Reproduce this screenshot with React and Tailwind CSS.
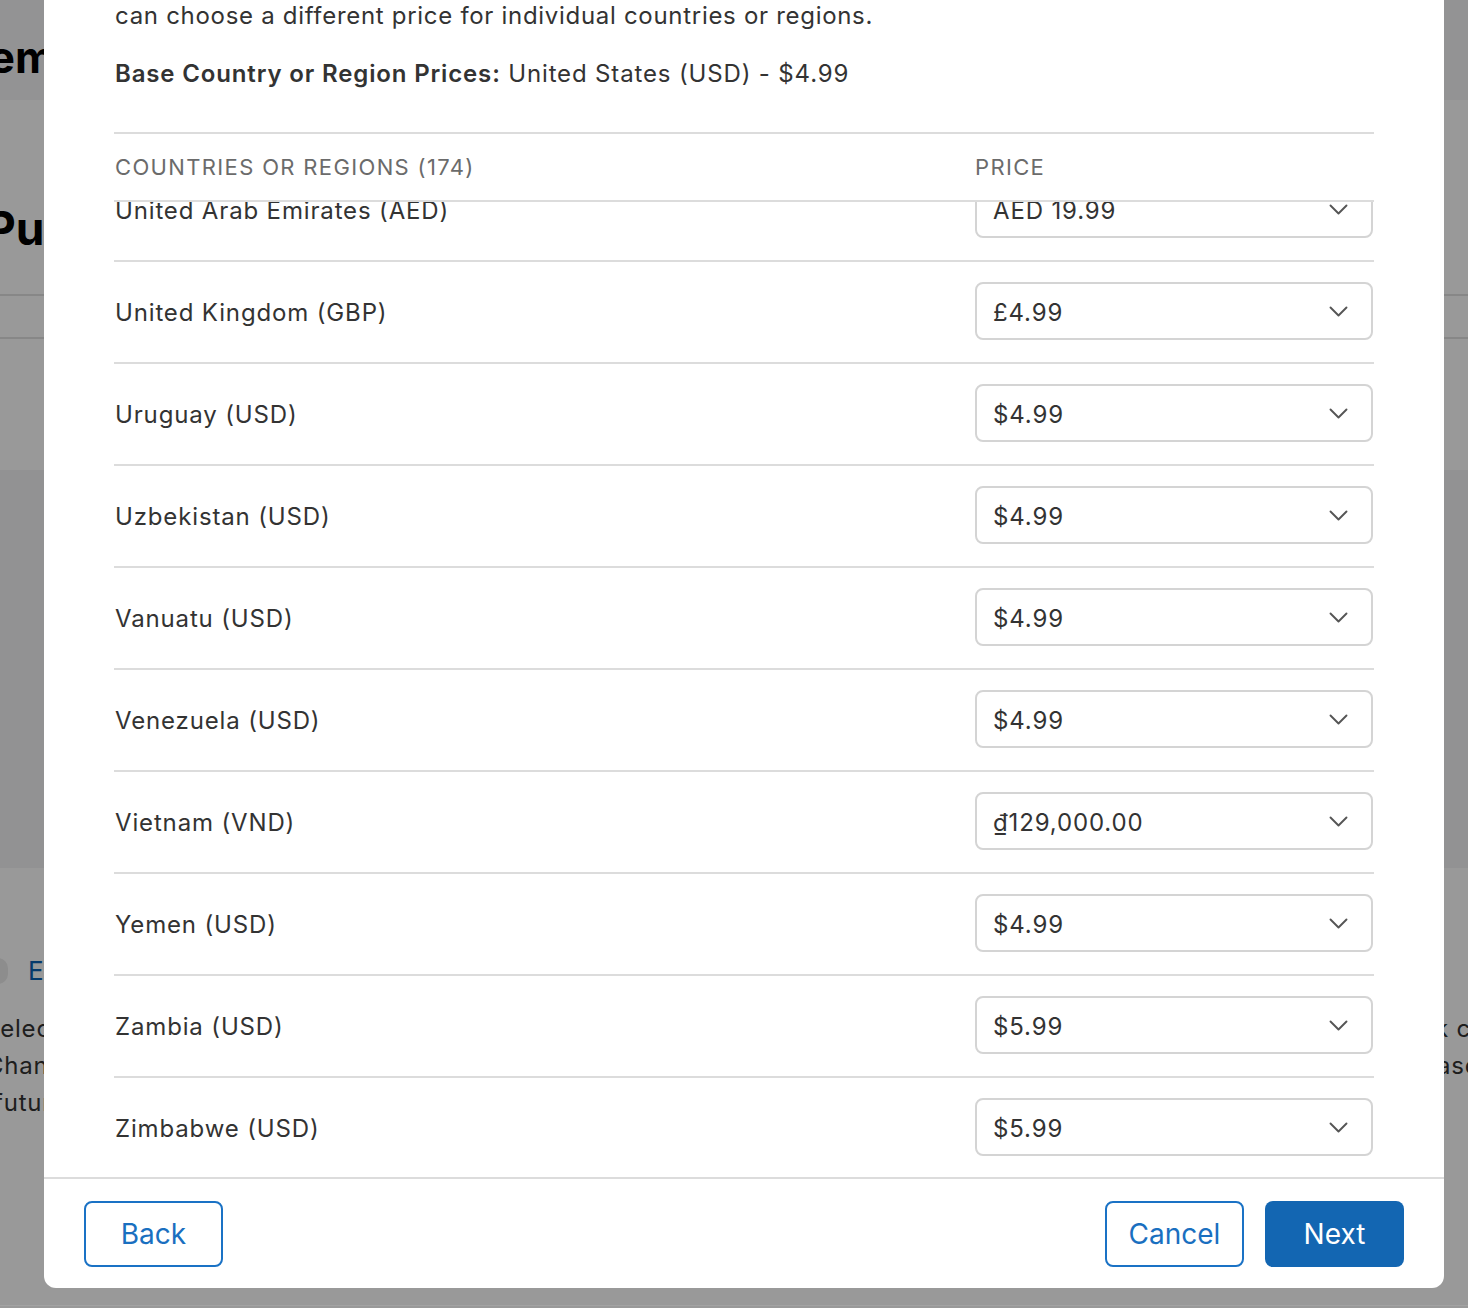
import React from 'react';

const rows = [
    { name: 'United Arab Emirates (AED)', price: 'AED 19.99' },
    { name: 'United Kingdom (GBP)', price: '£4.99' },
    { name: 'Uruguay (USD)', price: '$4.99' },
    { name: 'Uzbekistan (USD)', price: '$4.99' },
    { name: 'Vanuatu (USD)', price: '$4.99' },
    { name: 'Venezuela (USD)', price: '$4.99' },
    { name: 'Vietnam (VND)', price: '₫129,000.00' },
    { name: 'Yemen (USD)', price: '$4.99' },
    { name: 'Zambia (USD)', price: '$5.99' },
    { name: 'Zimbabwe (USD)', price: '$5.99' }
];

function Chevron() {
    return (
        <svg width="19" height="11" viewBox="0 0 19 11" fill="none" className="shrink-0">
            <path d="M1.5 1.5 L9.5 9.5 L17.5 1.5" stroke="#555" strokeWidth="1.9" strokeLinecap="round" strokeLinejoin="round" />
        </svg>
    );
}

function PriceSelect({ value }) {
    return (
        <div className="w-[398px] h-[58px] border-2 border-[#d4d4d4] rounded-[8px] bg-white flex items-center justify-between pl-[16px] pr-[23px]">
            <span className="pt-[3px] text-[24px] tracking-[0.85px] text-[#333]">{value}</span>
            <Chevron />
        </div>
    );
}

// page behind the dimmed overlay, only its edges show
function BackgroundPage() {
    return (
        <div className="w-full h-full flex flex-col bg-white text-[#333]">
            <div className="h-[100px] bg-[#f5f5f7] flex items-center pt-[14px]">
                <span className="-ml-[40px] text-[44px] font-bold text-black whitespace-nowrap">Item</span>
            </div>
            <div className="h-[370px] flex flex-col">
                <div className="mt-[100px] h-[56px] flex items-center">
                    <span className="-ml-[14px] text-[46px] font-bold text-black whitespace-nowrap">Purchase</span>
                </div>
                <div className="mt-[38px] h-[2px] bg-[#e2e2e2]" />
                <div className="mt-[41px] h-[2px] bg-[#e2e2e2]" />
            </div>
            <div className="h-[398px] bg-[#f4f4f6]" />
            <div className="flex-1 flex flex-col pt-[83px]">
                <div className="flex items-center gap-[20px] -ml-[12px]">
                    <div className="w-[20px] h-[26px] rounded-full bg-[#ececec]" />
                    <span className="text-[26px] text-[#0b62b3]">Edit</span>
                </div>
                <div className="mt-[20px] flex justify-between text-[24px] tracking-[0.8px] leading-[37px] whitespace-nowrap">
                    <div className="flex flex-col">
                        <span className="-ml-[16px]">Select</span>
                        <span className="-ml-[14px]">Change</span>
                        <span className="-ml-[6px]">future</span>
                    </div>
                    <div className="flex flex-col w-[30px] overflow-hidden">
                        <span className="-ml-[3px]">k c</span>
                        <span className="-ml-[1px]">ase</span>
                    </div>
                </div>
            </div>
        </div>
    );
}

export default function App() {
    return (
        <div className="relative w-[1468px] h-[1308px] overflow-hidden font-['Inter',sans-serif]">
            <BackgroundPage />
            <div className="absolute inset-0 bg-black/40" />
            <div className="absolute bottom-[2px] left-0 right-0 h-[1px] bg-white/10" />

            {/* modal */}
            <div className="absolute left-[44px] top-0 w-[1400px] bg-white rounded-b-[12px] flex flex-col text-[#333]">
                <div className="px-[70px]">
                    <p className="text-[24px] leading-[32px] tracking-[0.7px] pl-[1px]">can choose a different price for individual countries or regions.</p>
                    <p className="mt-[26px] text-[24px] leading-[32px] tracking-[0.85px] pl-[1px]">
                        <span className="font-semibold">Base Country or Region Prices:</span> United States (USD) - $4.99
                    </p>

                    <div className="mt-[42px] border-t-2 border-[#dcdcdc]">
                        <div className="h-[68px] flex items-center text-[22px] tracking-[1.35px] text-[#6b6b6b] uppercase border-b-2 border-[#dcdcdc]">
                            <div className="w-[861px] pl-[1px] pt-[1px]">Countries or Regions (174)</div>
                            <div className="pt-[1px]">Price</div>
                        </div>
                        <div className="h-[975px] overflow-hidden">
                            <div className="-mt-[42px]">
                                {rows.map((row) => (
                                    <div key={row.name} className="flex items-center pt-[20px] pb-[22px] border-b-2 border-[#dcdcdc]">
                                        <div className="w-[861px] pl-[1px] pt-[3px] text-[24px] tracking-[0.85px] text-[#333]">{row.name}</div>
                                        <PriceSelect value={row.price} />
                                    </div>
                                ))}
                            </div>
                        </div>
                    </div>
                </div>

                <div className="border-t-2 border-[#dcdcdc] px-[40px] pt-[22px] pb-[21px] flex items-center justify-between">
                    <button className="w-[139px] h-[66px] border-2 border-[#1a72c5] rounded-[8px] text-[28px] text-[#1a6fc0]">Back</button>
                    <div className="flex gap-[21px]">
                        <button className="w-[139px] h-[66px] border-2 border-[#1a72c5] rounded-[8px] text-[28px] text-[#1a6fc0]">Cancel</button>
                        <button className="w-[139px] h-[66px] rounded-[8px] bg-[#1366b2] text-[28px] text-white">Next</button>
                    </div>
                </div>
            </div>
        </div>
    );
}
